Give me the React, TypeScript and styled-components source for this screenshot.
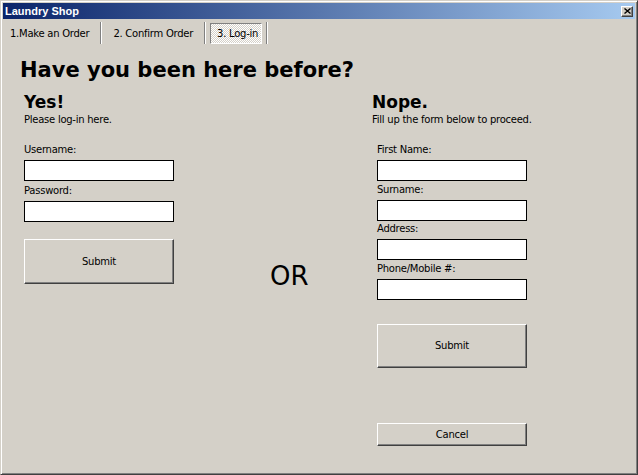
import styled, { createGlobalStyle } from "styled-components";

const Global = createGlobalStyle`
  html, body {
    margin: 0;
    padding: 0;
    background: #d4d0c8;
    overflow: hidden;
  }
  * { box-sizing: border-box; }
`;

const Window = styled.div`
  width: 638px;
  height: 475px;
  background: #d4d0c8;
  border: 1px solid;
  border-color: #d4d0c8 #404040 #404040 #d4d0c8;
  box-shadow: inset 1px 1px #ffffff, inset -1px -1px #808080;
  padding: 2px;
  display: flex;
  flex-direction: column;
  font-family: "DejaVu Sans", sans-serif;
  color: #000;
`;

const TitleBar = styled.div`
  height: 16px;
  display: flex;
  align-items: center;
  justify-content: space-between;
  padding: 0 2px 0 2px;
  background: linear-gradient(to right, #0a246a, #a6caf0);
`;

const Title = styled.span`
  font-family: "Liberation Sans", Arial, sans-serif;
  font-weight: bold;
  font-size: 11px;
  color: #fff;
`;

const CloseButton = styled.button`
  width: 12px;
  height: 11px;
  padding: 0;
  display: flex;
  align-items: center;
  justify-content: center;
  background: #d4d0c8;
  border: 1px solid;
  border-color: #ffffff #404040 #404040 #ffffff;
  box-shadow: inset -1px -1px #808080;
`;

const Toolbar = styled.div`
  height: 22px;
  margin-top: 3px;
  display: flex;
  align-items: center;
  gap: 4px;
`;

const Tab = styled.div<{ $active?: boolean }>`
  height: ${(p) => (p.$active ? "21px" : "20px")};
  display: flex;
  align-items: center;
  padding: 0 ${(p) => (p.$active ? "3px" : "6px")} 0 6px;
  font-size: 10px;
  letter-spacing: -0.25px;
  border: 1px solid transparent;
  ${(p) =>
    p.$active &&
    `
    border-color: #808080 #ffffff #ffffff #808080;
    background-color: #d4d0c8;
    background-image: repeating-conic-gradient(#ffffff 0 25%, #d4d0c8 0 50%);
    background-size: 2px 2px;
  `}
`;

const Separator = styled.div`
  width: 2px;
  height: 22px;
  border-left: 1px solid #808080;
  border-right: 1px solid #ffffff;
`;

const Content = styled.div`
  padding: 14px 0 0 17px;
`;

const Heading = styled.h1`
  margin: 0;
  font-size: 21px;
  line-height: 24px;
  font-weight: bold;
`;

const Columns = styled.div`
  display: grid;
  grid-template-columns: 150px 198px 1fr;
  margin: 10px 0 0 4px;
`;

const Column = styled.div`
  display: flex;
  flex-direction: column;
`;

const SubHeading = styled.h2`
  margin: 0;
  font-size: 17px;
  line-height: 20px;
  font-weight: bold;
`;

const Note = styled.p`
  margin: 2px 0 0;
  font-size: 10px;
  line-height: 12px;
  letter-spacing: -0.25px;
  white-space: nowrap;
`;

const Fields = styled.div<{ $indent?: number; $labelGap: number; $fieldGap: number }>`
  display: flex;
  flex-direction: column;
  width: 150px;
  margin: 18px 0 0 ${(p) => p.$indent ?? 0}px;

  label {
    display: block;
    font-size: 10px;
    line-height: 12px;
    letter-spacing: -0.25px;
    margin-bottom: ${(p) => p.$labelGap}px;
  }
  input + label {
    margin-top: ${(p) => p.$fieldGap}px;
  }
`;

const TextBox = styled.input`
  width: 150px;
  height: 21px;
  margin: 0;
  padding: 1px 3px;
  border: 1px solid #000;
  background: #fff;
  font-family: "DejaVu Sans", sans-serif;
  font-size: 10px;
  outline: none;
`;

const Actions = styled.div`
  display: flex;
  flex-direction: column;
  margin-left: 5px;
`;

const Button = styled.button<{ $height: number; $top: number }>`
  width: 150px;
  height: ${(p) => p.$height}px;
  margin-top: ${(p) => p.$top}px;
  padding: 0;
  background: #d4d0c8;
  border: 1px solid;
  border-color: #ffffff #404040 #404040 #ffffff;
  box-shadow: inset -1px -1px #808080;
  font-family: "DejaVu Sans", sans-serif;
  font-size: 10px;
  letter-spacing: -0.25px;
  color: #000;
`;

const Or = styled.div`
  margin: 169px 0 0 96px;
  font-size: 26px;
  line-height: 30px;
`;

export default function App() {
  return (
    <>
      <Global />
      <Window>
        <TitleBar>
          <Title>Laundry Shop</Title>
          <CloseButton aria-label="Close">
            <svg width="7" height="6" viewBox="0 0 7 6">
              <path d="M0.5 0.5 L6.5 5.5 M6.5 0.5 L0.5 5.5" stroke="#000" strokeWidth="1.4" />
            </svg>
          </CloseButton>
        </TitleBar>

        <Toolbar>
          <Tab>1.Make an Order</Tab>
          <Separator />
          <Tab>2. Confirm Order</Tab>
          <Separator />
          <Tab $active>3. Log-in</Tab>
          <Separator />
        </Toolbar>

        <Content>
          <Heading>Have you been here before?</Heading>
          <Columns>
            <Column>
              <SubHeading>Yes!</SubHeading>
              <Note>Please log-in here.</Note>
              <Fields $labelGap={4} $fieldGap={4}>
                <label>Username:</label>
                <TextBox type="text" />
                <label>Password:</label>
                <TextBox type="password" />
              </Fields>
              <Button $height={45} $top={17}>Submit</Button>
            </Column>

            <Column>
              <Or>OR</Or>
            </Column>

            <Column>
              <SubHeading>Nope.</SubHeading>
              <Note>Fill up the form below to proceed.</Note>
              <Fields $indent={5} $labelGap={4} $fieldGap={2.5}>
                <label>First Name:</label>
                <TextBox type="text" />
                <label>Surname:</label>
                <TextBox type="text" />
                <label>Address:</label>
                <TextBox type="text" />
                <label>Phone/Mobile #:</label>
                <TextBox type="text" />
              </Fields>
              <Actions>
                <Button $height={44} $top={24}>Submit</Button>
                <Button $height={23} $top={55}>Cancel</Button>
              </Actions>
            </Column>
          </Columns>
        </Content>
      </Window>
    </>
  );
}
